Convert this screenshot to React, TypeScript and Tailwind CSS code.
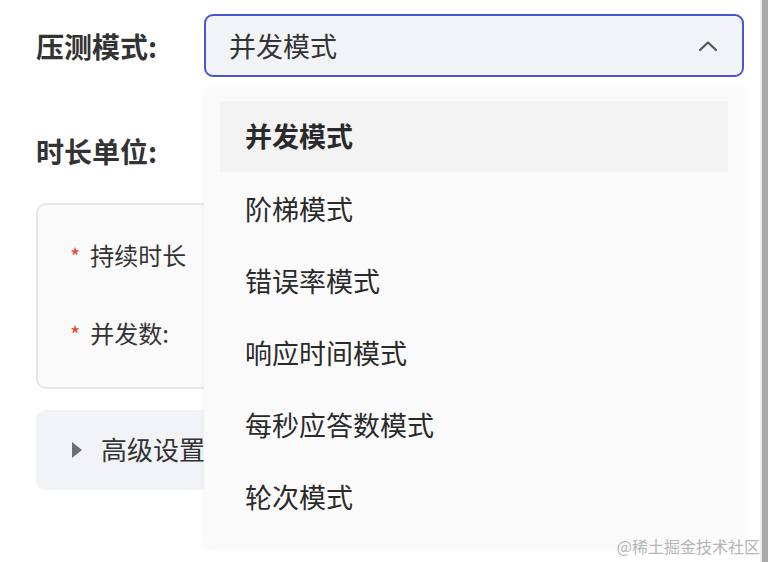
import React from "react";

const font = { fontFamily: '"Noto Sans CJK SC", "Noto Sans", sans-serif' };

export default function App() {
  const items = ["并发模式", "阶梯模式", "错误率模式", "响应时间模式", "每秒应答数模式", "轮次模式"];
  return (
    <div className="relative w-[768px] h-[562px] overflow-hidden bg-white text-[#333]" style={font}>
      <div className="flex flex-col pl-[36px] pr-[24px] pt-[14px]">
        <div className="flex items-center h-[63px]">
          <div className="w-[168px] text-[28px] leading-none font-bold text-[#333]">压测模式:</div>
          <div className="flex items-center justify-between w-[540px] h-[63px] rounded-[9px] border-2 border-[#4b55cf] bg-[#f1f3f6] pl-[23px] pr-[24px]">
            <span className="text-[27px] leading-none text-[#333]">并发模式</span>
            <svg width="20" height="12" viewBox="0 0 20 12" fill="none">
              <path d="M2 10 L10 2.5 L18 10" stroke="#555" strokeWidth="2.2" strokeLinecap="round" strokeLinejoin="round" />
            </svg>
          </div>
        </div>
        <div className="mt-[60px] h-[28px] flex items-center text-[28px] leading-none font-bold text-[#333]">时长单位:</div>
        <div className="mt-[38px] h-[186px] w-[708px] rounded-[10px] border-2 border-[#e6e6e6] bg-[#fafafa] flex flex-col pl-[32px] pt-[38px] gap-[54px]">
          <div className="flex items-center h-[24px] text-[24px] leading-none text-[#333]">
            <span className="text-[#e2452f] mr-[10px] text-[22px]">*</span>持续时长
          </div>
          <div className="flex items-center h-[24px] text-[24px] leading-none text-[#333]">
            <span className="text-[#e2452f] mr-[10px] text-[22px]">*</span>并发数:
          </div>
        </div>
        <div className="mt-[21px] h-[80px] w-[708px] rounded-[9px] bg-[#f1f3f6] flex items-center pl-[36px]">
          <svg width="10" height="16" viewBox="0 0 10 16">
            <path d="M0 0 L10 8 L0 16 Z" fill="#6b7078" />
          </svg>
          <span className="ml-[19px] text-[26px] leading-none text-[#333] -mt-[2px]">高级设置</span>
        </div>
      </div>

      <div className="absolute left-[204px] top-[88px] w-[540px] h-[458px] bg-[#fafafa] shadow-[0_2px_8px_rgba(0,0,0,0.04)] px-[16px] pt-[13px]">
        {items.map((t, i) => (
          <div
            key={t}
            className={
              i === 0
                ? "flex items-center h-[71px] mb-[1px] pl-[25px] bg-[#f3f3f3] text-[27px] font-bold text-[#2a2a2a]"
                : "flex items-center h-[72px] pl-[25px] text-[27px] text-[#2a2a2a]"
            }
          >
            {t}
          </div>
        ))}
      </div>

      <div className="absolute right-[8px] bottom-[4px] text-[16px] text-[#b5b5b5]" style={font}>
        @稀土掘金技术社区
      </div>
      <div className="absolute right-[6px] top-0 w-[2px] h-full bg-[#ececec]" />
      <div className="absolute right-0 top-0 w-[6px] h-full bg-[#a8a8a8]" />
    </div>
  );
}
